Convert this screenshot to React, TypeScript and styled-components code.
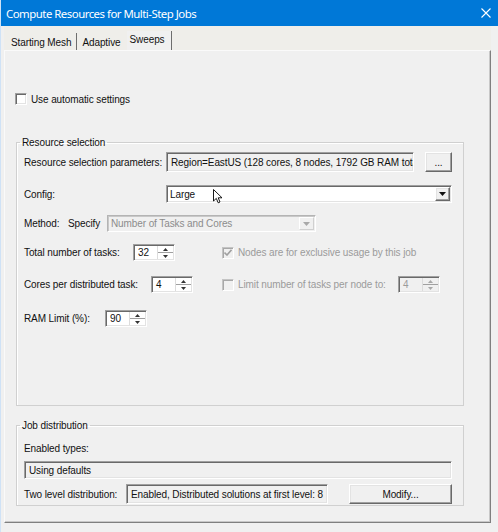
import React from "react";
import styled, { createGlobalStyle, css } from "styled-components";

const GlobalStyle = createGlobalStyle`
  html, body {
    margin: 0;
    padding: 0;
    background: #f0f0f0;
  }
  body {
    font-family: "Liberation Sans", Arial, sans-serif;
    font-size: 10px;
    letter-spacing: -0.1px;
    color: #111;
  }
`;

const sunken = css`
  border-top: 1px solid #a0a0a0;
  border-left: 1px solid #a0a0a0;
  border-right: 1px solid #ffffff;
  border-bottom: 1px solid #ffffff;
  box-shadow: inset 1px 1px 0 #696969, inset -1px -1px 0 #e3e3e3;
`;

const raised = css`
  border-top: 1px solid #ffffff;
  border-left: 1px solid #ffffff;
  border-right: 1px solid #696969;
  border-bottom: 1px solid #696969;
  box-shadow: inset -1px -1px 0 #a0a0a0, inset 1px 1px 0 #e3e3e3;
`;

const Window = styled.div`
  width: 498px;
  height: 532px;
  display: flex;
  flex-direction: column;
  background: #f0f0f0;
  border-left: 1px solid #cfe2f6;
  box-sizing: border-box;
  overflow: hidden;
`;

const TitleBar = styled.div`
  height: 26px;
  flex: none;
  display: flex;
  align-items: center;
  justify-content: space-between;
  padding: 0 7px 0 5px;
  background: #0078d7;
  color: #fff;
  font-family: "Noto Sans", "Open Sans", sans-serif;
  font-size: 11.4px;
  letter-spacing: -0.5px;
`;

const Client = styled.div`
  flex: 1;
  display: flex;
  flex-direction: column;
  padding: 0 7px 9px 3px;
  min-height: 0;
`;

const TabStrip = styled.div`
  height: 24px;
  flex: none;
  display: flex;
  align-items: flex-end;
  padding-left: 2px;
  background: #efeeea;
`;

const Tab = styled.div<{ $selected?: boolean; $beforeSelected?: boolean }>`
  display: flex;
  align-items: center;
  border-right: 1px solid ${(p) => (p.$beforeSelected ? "transparent" : "#6e6e6e")};
  ${(p) =>
    p.$selected
      ? css`
          height: 17px;
          padding: 0 6px 2px 3px;
          background: #f0f0f0;
        `
      : css`
          height: 16px;
          padding: 1px 5px 0 5px;
        `}
`;

const Panel = styled.div`
  flex: 1;
  display: flex;
  flex-direction: column;
  align-items: flex-start;
  border-top: 1px solid #fafafa;
  border-left: 1px solid #fafafa;
  border-right: 1px solid #7f7f7f;
  border-bottom: 1px solid #7f7f7f;
  box-shadow: inset -1px -1px 0 #c8c8c8;
  padding: 41px 0 0 10px;
`;

const CheckRow = styled.label<{ $disabled?: boolean }>`
  display: flex;
  align-items: center;
  gap: 4px;
  height: 14px;
  color: ${(p) => (p.$disabled ? "#9b9b9b" : "#111")};
`;

const Box = styled.span<{ $disabled?: boolean }>`
  width: 10px;
  height: 10px;
  flex: none;
  display: flex;
  align-items: center;
  justify-content: center;
  background: ${(p) => (p.$disabled ? "#f0f0f0" : "#fff")};
  ${sunken}
  ${(p) =>
    p.$disabled &&
    css`
      border-color: #c4c4c4 #fff #fff #c4c4c4;
      box-shadow: inset 1px 1px 0 #a8a8a8;
    `}
`;

const Group = styled.fieldset<{ $top: number; $padTop: number; $padBottom: number }>`
  width: 448px;
  box-sizing: border-box;
  flex: none;
  margin: ${(p) => p.$top}px 0 0 1px;
  padding: ${(p) => p.$padTop}px 8px ${(p) => p.$padBottom}px 7px;
  border: 1px solid #d0d0d0;
  box-shadow: 1px 1px 0 #fff inset;
  display: flex;
  flex-direction: column;
  min-width: 0;
`;

const Legend = styled.legend`
  padding: 0 2px;
  margin-left: -4px;
  line-height: 13px;
`;

const Row = styled.div<{ $top?: number; $h?: number }>`
  display: flex;
  align-items: center;
  height: ${(p) => p.$h ?? 20}px;
  margin-top: ${(p) => p.$top ?? 0}px;
`;

const Columns = styled.div<{ $top: number }>`
  display: grid;
  grid-template-columns: 198px 1fr;
  align-items: center;
  height: 17px;
  margin-top: ${(p) => p.$top}px;
`;

const Cell = styled.div`
  display: flex;
  align-items: center;
`;

const Label = styled.span<{ $w?: number; $disabled?: boolean; $indent?: number }>`
  flex: none;
  width: ${(p) => (p.$w ? `${p.$w}px` : "auto")};
  margin-left: ${(p) => p.$indent ?? 0}px;
  white-space: nowrap;
  color: ${(p) => (p.$disabled ? "#9b9b9b" : "#111")};
`;

const Field = styled.div<{ $w: number; $h?: number }>`
  width: ${(p) => p.$w}px;
  height: ${(p) => p.$h ?? 20}px;
  box-sizing: border-box;
  flex: none;
  display: flex;
  align-items: center;
  padding: 0 4px;
  overflow: hidden;
  white-space: nowrap;
  background: #f0f0f0;
  ${sunken}
`;

const Button = styled.div<{ $w: number; $left?: number }>`
  width: ${(p) => p.$w}px;
  height: 20px;
  box-sizing: border-box;
  flex: none;
  margin-left: ${(p) => p.$left ?? 0}px;
  display: flex;
  align-items: center;
  justify-content: center;
  background: #f0f0f0;
  ${raised}
`;

const Combo = styled.div<{ $w: number; $h: number; $disabled?: boolean }>`
  position: relative;
  width: ${(p) => p.$w}px;
  height: ${(p) => p.$h}px;
  box-sizing: border-box;
  flex: none;
  display: flex;
  align-items: center;
  padding-left: 3px;
  background: ${(p) => (p.$disabled ? "#f0f0f0" : "#fff")};
  color: ${(p) => (p.$disabled ? "#8c8c8c" : "#111")};
  ${sunken}
  ${(p) =>
    p.$disabled &&
    css`
      border-color: #b4b4b4 #fff #fff #b4b4b4;
      box-shadow: inset 1px 1px 0 #c8c8c8;
    `}
`;

const ComboText = styled.span`
  flex: 1;
  white-space: nowrap;
  overflow: hidden;
`;

const DropButton = styled.span<{ $disabled?: boolean }>`
  width: 15px;
  align-self: stretch;
  margin: 1px;
  box-sizing: border-box;
  display: flex;
  align-items: center;
  justify-content: center;
  background: #f0f0f0;
  ${raised}
  ${(p) =>
    p.$disabled &&
    css`
      border-color: #fff #d0d0d0 #d0d0d0 #fff;
      box-shadow: none;
    `}
`;

const Spin = styled.div<{ $disabled?: boolean }>`
  width: 42px;
  height: 17px;
  box-sizing: border-box;
  flex: none;
  display: flex;
  background: ${(p) => (p.$disabled ? "#f0f0f0" : "#fff")};
  color: ${(p) => (p.$disabled ? "#9b9b9b" : "#111")};
  ${sunken}
`;

const SpinValue = styled.span`
  flex: 1;
  display: flex;
  align-items: center;
  padding-left: 4px;
`;

const SpinArrows = styled.span`
  width: 15px;
  display: flex;
  flex-direction: column;
  margin: 1px 1px 1px 0;
  border-left: 1px solid #dcdcdc;
`;

const SpinHalf = styled.span`
  flex: 1;
  display: flex;
  align-items: center;
  justify-content: center;
  & + & {
    border-top: 1px solid #a0a0a0;
  }
`;

const Cursor = styled.svg`
  position: absolute;
  left: 46px;
  top: 3px;
`;

function Triangle({ down, color = "#111" }: { down?: boolean; color?: string }) {
  return (
    <svg width="7" height="4" viewBox="0 0 7 4">
      <path d={down ? "M0 0H7L3.5 4Z" : "M0 4H7L3.5 0Z"} fill={color} />
    </svg>
  );
}

function SpinBox({ value, disabled }: { value: string; disabled?: boolean }) {
  const c = disabled ? "#a8a8a8" : "#333";
  return (
    <Spin $disabled={disabled}>
      <SpinValue>{value}</SpinValue>
      <SpinArrows>
        <SpinHalf>
          <svg width="5" height="3" viewBox="0 0 5 3">
            <path d="M0 3H5L2.5 0Z" fill={c} />
          </svg>
        </SpinHalf>
        <SpinHalf>
          <svg width="5" height="3" viewBox="0 0 5 3">
            <path d="M0 0H5L2.5 3Z" fill={c} />
          </svg>
        </SpinHalf>
      </SpinArrows>
    </Spin>
  );
}

function CheckBox({
  label,
  checked,
  disabled,
}: {
  label?: string;
  checked?: boolean;
  disabled?: boolean;
}) {
  return (
    <CheckRow $disabled={disabled}>
      <Box $disabled={disabled}>
        {checked && (
          <svg width="8" height="7" viewBox="0 0 8 7">
            <path
              d="M0.5 3.5L3 6L7.5 0.8"
              fill="none"
              stroke={disabled ? "#a0a0a0" : "#111"}
              strokeWidth="1.6"
            />
          </svg>
        )}
      </Box>
      {label}
    </CheckRow>
  );
}

export default function App() {
  return (
    <>
      <GlobalStyle />
      <Window>
        <TitleBar>
          <span>Compute Resources for Multi-Step Jobs</span>
          <svg width="10" height="10" viewBox="0 0 10 10">
            <path d="M0.5 0.5L9.5 9.5M9.5 0.5L0.5 9.5" stroke="#fff" strokeWidth="1.1" />
          </svg>
        </TitleBar>
        <Client>
          <TabStrip>
            <Tab>Starting Mesh</Tab>
            <Tab $beforeSelected>Adaptive</Tab>
            <Tab $selected>Sweeps</Tab>
          </TabStrip>
          <Panel>
            <CheckBox label="Use automatic settings" />

            <Group $top={30} $padTop={3} $padBottom={78}>
              <Legend>Resource selection</Legend>
              <Row>
                <Label $w={142}>Resource selection parameters:</Label>
                <Field $w={248}>Region=EastUS (128 cores, 8 nodes, 1792 GB RAM total)</Field>
                <Button $w={27} $left={11}>...</Button>
              </Row>
              <Row $top={13} $h={18}>
                <Label $w={142}>Config:</Label>
                <Combo $w={286} $h={18}>
                  <ComboText>Large</ComboText>
                  <DropButton>
                    <Triangle down />
                  </DropButton>
                  <Cursor width="10" height="15" viewBox="0 0 10 15">
                    <path
                      d="M0.5 0.5V12L3.3 9.4L5.2 13.8L7 13L5.2 8.8H9Z"
                      fill="#fff"
                      stroke="#000"
                      strokeWidth="0.9"
                      strokeLinejoin="round"
                    />
                  </Cursor>
                </Combo>
              </Row>
              <Row $top={12} $h={17}>
                <Label $w={44}>Method:</Label>
                <Label $w={39}>Specify</Label>
                <Combo $w={209} $h={17} $disabled>
                  <ComboText>Number of Tasks and Cores</ComboText>
                  <DropButton $disabled>
                    <Triangle down color="#a8a8a8" />
                  </DropButton>
                </Combo>
              </Row>
              <Columns $top={12}>
                <Cell>
                  <Label $w={109}>Total number of tasks:</Label>
                  <SpinBox value="32" />
                </Cell>
                <Cell>
                  <CheckBox label="Nodes are for exclusive usage by this job" checked disabled />
                </Cell>
              </Columns>
              <Columns $top={15}>
                <Cell>
                  <Label $w={127}>Cores per distributed task:</Label>
                  <SpinBox value="4" />
                </Cell>
                <Cell>
                  <CheckBox disabled />
                  <Label $w={160} $disabled $indent={4}>
                    Limit number of tasks per node to:
                  </Label>
                  <SpinBox value="4" disabled />
                </Cell>
              </Columns>
              <Row $top={17} $h={17}>
                <Label $w={81}>RAM Limit (%):</Label>
                <SpinBox value="90" />
              </Row>
            </Group>

            <Group $top={13} $padTop={10} $padBottom={1}>
              <Legend>Job distribution</Legend>
              <Row $h={13}>
                <Label>Enabled types:</Label>
              </Row>
              <Row $top={6} $h={18}>
                <Field $w={428} $h={18}>Using defaults</Field>
              </Row>
              <Row $top={5}>
                <Label $w={102}>Two level distribution:</Label>
                <Field $w={202}>Enabled, Distributed solutions at first level: 8</Field>
                <Button $w={103} $left={21}>Modify...</Button>
              </Row>
            </Group>
          </Panel>
        </Client>
      </Window>
    </>
  );
}
